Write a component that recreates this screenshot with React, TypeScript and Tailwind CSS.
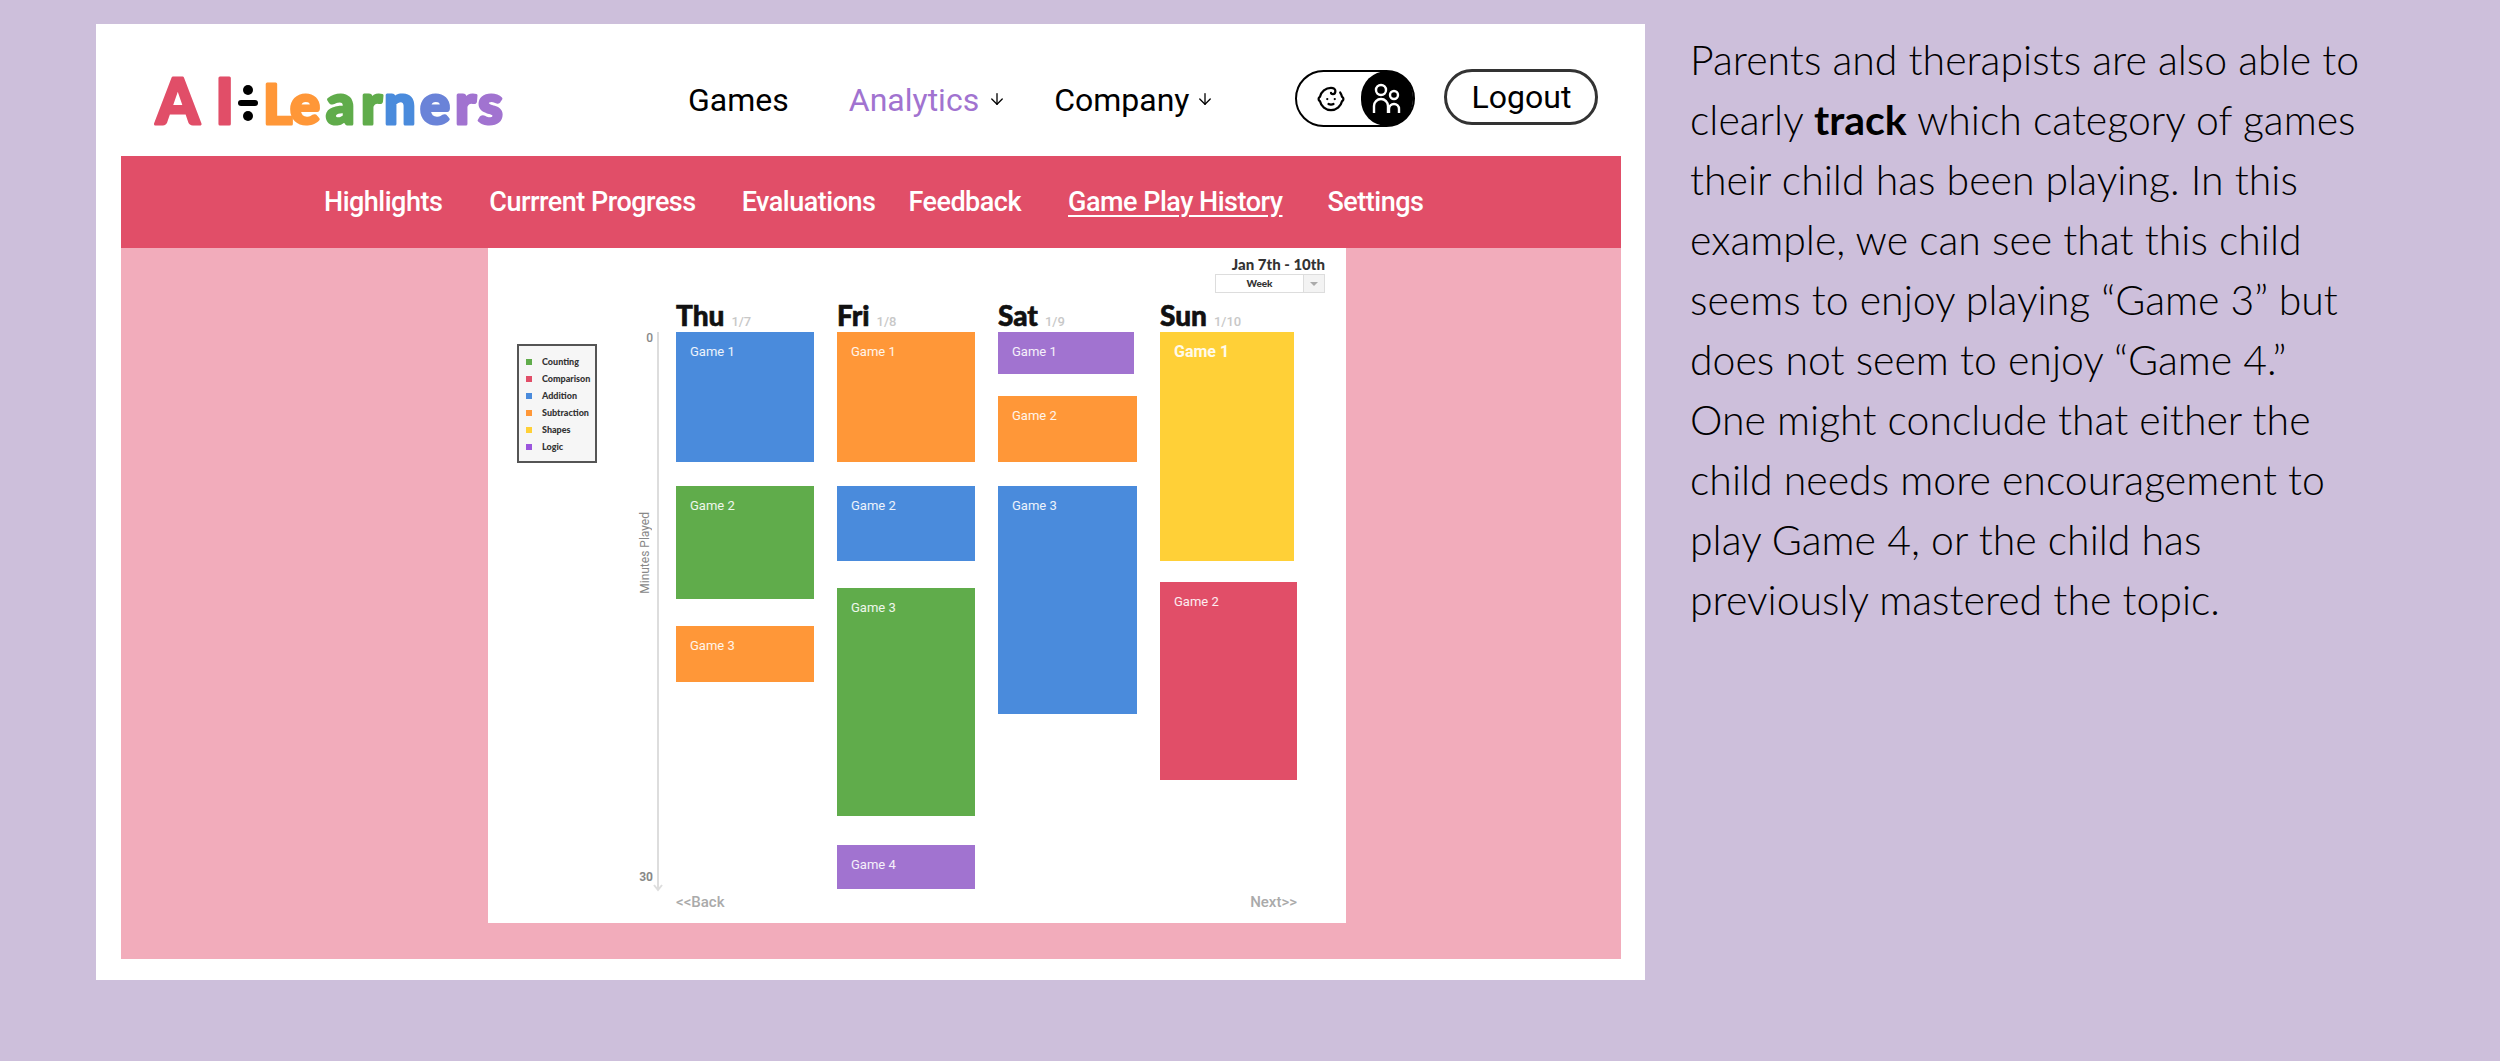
import { ArrowDown, Baby } from "lucide-react";

const RED = "#e14e68";

const subNav = [
  { label: "Highlights", cls: "ml-[203px]" },
  { label: "Currrent Progress", cls: "ml-[47px]" },
  { label: "Evaluations", cls: "ml-[46px]" },
  { label: "Feedback", cls: "ml-[33px]" },
  { label: "Game Play History", cls: "ml-[47px] underline underline-offset-4" },
  { label: "Settings", cls: "ml-[45px]" },
];

const legend = [
  { label: "Counting", cls: "bg-[#60ac4b]" },
  { label: "Comparison", cls: "bg-[#e14e68]" },
  { label: "Addition", cls: "bg-[#4a8bdc]" },
  { label: "Subtraction", cls: "bg-[#ff9738]" },
  { label: "Shapes", cls: "bg-[#ffd037]" },
  { label: "Logic", cls: "bg-[#9b55dd]" },
];

const days = [
  {
    day: "Thu",
    date: "1/7",
    cls: "w-[138px] ml-[18px]",
    blocks: [
      { label: "Game 1", cls: "h-[130px] bg-[#4a8bdc]" },
      { label: "Game 2", cls: "h-[113px] mt-[24px] bg-[#60ac4b]" },
      { label: "Game 3", cls: "h-[56px] mt-[27px] bg-[#ff9738]" },
    ],
  },
  {
    day: "Fri",
    date: "1/8",
    cls: "w-[138px] ml-[23px]",
    blocks: [
      { label: "Game 1", cls: "h-[130px] bg-[#ff9738]" },
      { label: "Game 2", cls: "h-[75px] mt-[24px] bg-[#4a8bdc]" },
      { label: "Game 3", cls: "h-[228px] mt-[27px] bg-[#60ac4b]" },
      { label: "Game 4", cls: "h-[44px] mt-[29px] bg-[#a173d0]" },
    ],
  },
  {
    day: "Sat",
    date: "1/9",
    cls: "w-[139px] ml-[23px]",
    blocks: [
      { label: "Game 1", cls: "h-[42px] w-[136px] bg-[#a173d0]" },
      { label: "Game 2", cls: "h-[66px] mt-[22px] bg-[#ff9738]" },
      { label: "Game 3", cls: "h-[228px] mt-[24px] bg-[#4a8bdc]" },
    ],
  },
  {
    day: "Sun",
    date: "1/10",
    cls: "w-[137px] ml-[23px]",
    blocks: [
      { label: "Game 1", cls: "h-[229px] w-[134px] bg-[#ffd037] font-bold text-[16px]" },
      { label: "Game 2", cls: "h-[198px] mt-[21px] bg-[#e14e68]" },
    ],
  },
];

function Logo() {
  return (
    <svg width="360" height="56" viewBox="0 0 360 56" aria-label="AI Learners">
      <g
        fontFamily="Lato, sans-serif"
        fontWeight="900"
        fontSize="62"
        strokeLinejoin="round"
        strokeWidth="3"
        paintOrder="stroke"
      >
        <text x="2" y="50" fill={RED} stroke={RED} textLength="78" lengthAdjust="spacing">
          AI
        </text>
        <text x="109" y="50" fontSize="56" fill="#ff9738" stroke="#ff9738">
          L
        </text>
        <text x="136" y="50" fontSize="56" fill="#ff9738" stroke="#ff9738">
          e
        </text>
        <text x="172" y="50" fontSize="56" fill="#60ac4b" stroke="#60ac4b">
          a
        </text>
        <text x="207" y="50" fontSize="56" fill="#60ac4b" stroke="#60ac4b">
          r
        </text>
        <text x="230" y="50" fontSize="56" fill="#4a8bdc" stroke="#4a8bdc">
          n
        </text>
        <text x="266" y="50" fontSize="56" fill="#6a83d8" stroke="#6a83d8">
          e
        </text>
        <text x="301" y="50" fontSize="56" fill="#a173d0" stroke="#a173d0">
          r
        </text>
        <text x="324" y="50" fontSize="56" fill="#a173d0" stroke="#a173d0">
          s
        </text>
      </g>
      <circle cx="94" cy="16" r="5" fill="#000" />
      <rect x="84" y="26" width="20" height="6" rx="3" fill="#000" />
      <circle cx="94" cy="42" r="5" fill="#000" />
    </svg>
  );
}

function ParentsIcon() {
  return (
    <svg width="32" height="34" viewBox="0 0 32 34" fill="none" stroke="#fff" strokeWidth="2.4">
      <circle cx="10" cy="8" r="5" />
      <circle cx="23" cy="13" r="4" />
      <path d="M3 31v-7a7 7 0 0 1 14 0v7" />
      <path d="M18 31v-4a5 5 0 0 1 10 0v4" />
    </svg>
  );
}

function Header() {
  return (
    <header className="flex h-[132px] shrink-0 items-start font-['Roboto',sans-serif] text-[32px] leading-none text-black">
      <div className="ml-[33px] mt-[50px] shrink-0">
        <Logo />
      </div>
      <span className="ml-[174px] mt-[60px]">Games</span>
      <span className="ml-[60px] mt-[60px] text-[#a173d0]">Analytics</span>
      <ArrowDown className="ml-[9px] mt-[66px] text-black" size={18} strokeWidth={1.75} />
      <span className="ml-[48px] mt-[60px]">Company</span>
      <ArrowDown className="ml-[7px] mt-[66px]" size={18} strokeWidth={1.75} />
      <div className="ml-[81px] mt-[46px] flex h-[57px] w-[120px] items-center justify-between rounded-full border-2 border-black pl-[19px]">
        <Baby size={30} strokeWidth={1.8} />
        <div className="flex h-[55px] w-[52px] items-center justify-center rounded-full bg-black">
          <ParentsIcon />
        </div>
      </div>
      <div className="ml-[29px] mt-[45px] flex h-[56px] w-[154px] items-center justify-center rounded-full border-[3px] border-[#333]">
        Logout
      </div>
    </header>
  );
}

function Legend() {
  return (
    <div className="ml-[29px] mt-[46px] flex h-[119px] w-[80px] shrink-0 flex-col gap-[6px] border-2 border-[#555] bg-[#f6f6f6] pl-[7px] pt-[10px] font-['Lato',sans-serif] text-[9px] font-black leading-[11px] text-[#333]">
      {legend.map((item) => (
        <div key={item.label} className="flex items-center gap-[10px]">
          <span className={"h-[6px] w-[6px] shrink-0 " + item.cls} />
          {item.label}
        </div>
      ))}
    </div>
  );
}

function Axis() {
  return (
    <div className="ml-[43px] mt-[34px] flex h-[561px] w-[18px] shrink-0 gap-[3px]">
      <div className="flex w-[13px] flex-col items-end justify-between pb-[10px] font-['Roboto',sans-serif] text-[12px] font-medium leading-none text-[#888]">
        <span>0</span>
        <span className="mr-[2px] mt-[20px] whitespace-nowrap [writing-mode:vertical-rl] rotate-180 font-normal">
          Minutes Played
        </span>
        <span className="mt-[130px] font-bold">30</span>
      </div>
      <svg width="10" height="561" viewBox="0 0 10 561" className="-ml-[3px] shrink-0" fill="none" stroke="#dddddd" strokeWidth="2">
        <path d="M5 0v558M1 553l4 5 4-5" />
      </svg>
    </div>
  );
}

function Chart() {
  return (
    <div className="ml-[367px] flex h-[675px] w-[858px] shrink-0 flex-col bg-white">
      {/* date range + select */}
      <div className="flex h-[50px] shrink-0 flex-col items-end pr-[21px] pt-[7px] font-['Lato',sans-serif]">
        <span className="text-[15px] font-black leading-[18px] text-[#333]">Jan 7th - 10th</span>
        <div className="mt-[1px] flex h-[19px] w-[110px] border border-[#ddd] text-[10px] font-black leading-[17px] text-[#333]">
          <span className="flex-1 text-center">Week</span>
          <span className="relative w-[21px] border-l border-[#ddd] bg-[#f3f3f3]">
            <span className="absolute left-[6px] top-[7px] h-0 w-0 border-x-[4px] border-t-[4px] border-x-transparent border-t-[#aaa]" />
          </span>
        </div>
      </div>

      <div className="flex h-[595px] shrink-0">
        <Legend />
        <Axis />
        {days.map((d) => (
          <div key={d.day} className={"flex shrink-0 flex-col " + d.cls}>
            <div className="flex h-[34px] items-baseline gap-[7px] whitespace-nowrap pt-[3px] font-['Lato',sans-serif]">
              <span className="text-[28px] font-black leading-[28px] text-[#111] [-webkit-text-stroke:0.6px_#111]">
                {d.day}
              </span>
              <span className="font-['Roboto',sans-serif] text-[13px] font-medium leading-none text-[#c8c8c8]">
                {d.date}
              </span>
            </div>
            {d.blocks.map((b) => (
              <div
                key={b.label}
                className={
                  "pl-[14px] pt-[12px] font-['Roboto',sans-serif] text-[13px] leading-[15px] text-white/90 " + b.cls
                }
              >
                {b.label}
              </div>
            ))}
          </div>
        ))}
      </div>

      <div className="flex justify-between pl-[188px] pr-[49px] font-['Roboto',sans-serif] text-[15px] font-medium leading-[18px] text-[#aaa]">
        <span>&lt;&lt;Back</span>
        <span>Next&gt;&gt;</span>
      </div>
    </div>
  );
}

const lines = [
  <>Parents and therapists are also able to</>,
  <>
    clearly <b className="font-bold">track</b> which category of games
  </>,
  <>their child has been playing. In this</>,
  <>example, we can see that this child</>,
  <>seems to enjoy playing “Game 3” but</>,
  <>does not seem to enjoy “Game 4.”</>,
  <>One might conclude that either the</>,
  <>child needs more encouragement to</>,
  <>play Game 4, or the child has</>,
  <>previously mastered the topic.</>,
];

export default function App() {
  return (
    <div className="flex h-[1061px] w-[2500px] overflow-hidden bg-[#cdbfdb] pl-[96px] pt-[24px]">
      <div className="flex h-[956px] w-[1549px] shrink-0 flex-col bg-white pl-[25px] pr-[24px]">
        <Header />
        <nav className="flex h-[92px] shrink-0 items-center whitespace-nowrap bg-[#e14e68] font-['Roboto',sans-serif] text-[27px] font-medium text-white">
          {subNav.map((item) => (
            <span key={item.label} className={"tracking-[-0.5px] " + item.cls}>
              {item.label}
            </span>
          ))}
        </nav>
        <div className="flex h-[711px] shrink-0 bg-[#f2acbb]">
          <Chart />
        </div>
      </div>
      <div className="ml-[45px] whitespace-nowrap pt-[6px] font-['Lato',sans-serif] text-[41px] font-light leading-[60px] text-black">
        {lines.map((line, i) => (
          <div key={i}>{line}</div>
        ))}
      </div>
    </div>
  );
}
